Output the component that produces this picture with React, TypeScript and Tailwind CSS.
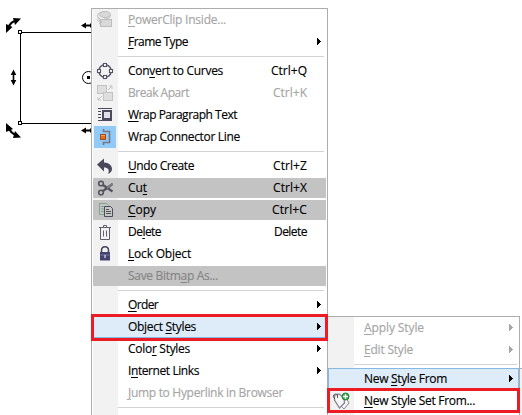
import React from "react";

type IconName = "clip" | "curves" | "break" | "wrap" | "connector" | "undo" | "cut" | "copy" | "delete" | "lock" | "styleSet";

function Icon({ name }: { name: IconName }) {
  const art: Record<IconName, React.ReactNode> = {
    clip: (
      <g fill="#d9d9d9" stroke="#bcbcbc">
        <path d="M6 10C2 8 3 3 9 3" fill="none" />
        <ellipse cx="11" cy="5.500" rx="5.500" ry="3" />
        <path d="M16 6c1 3-2 4-6 4" fill="none" />
        <rect x="6.500" y="10.500" width="11" height="7" />
        <path d="M6 9c-3 0-3 4 0 4M5 11l3 2-3 2" fill="none" />
      </g>
    ),
    curves: (
      <g fill="#fff" stroke="#555266" strokeWidth="1.1">
        <circle cx="11" cy="11" r="6.2" fill="none" strokeWidth="1.4" />
        <rect x="9.5" y="3.5" width="3" height="3" />
        <rect x="9.5" y="15.5" width="3" height="3" />
        <rect x="3.5" y="9.5" width="3" height="3" />
        <rect x="15.5" y="9.5" width="3" height="3" />
      </g>
    ),
    break: (
      <g fill="#dedede" stroke="#c3c3c3">
        <rect x="3.5" y="3.5" width="9" height="8" />
        <rect x="9.500" y="10.500" width="9" height="8" />
        <path d="M14 8l4-4m-3 0h3v3M8 14l-4 4m0-3v3h3" fill="none" />
      </g>
    ),
    wrap: (
      <g stroke="#4c4960" fill="none">
        <path d="M4 4.500h14M4 7.500h3M4 10.500h3M4 13.500h3M4 16.500h14" />
        <rect x="9" y="7" width="8" height="8" strokeWidth="2" fill="#dfe0ea" />
      </g>
    ),
    connector: (
      <g>
        <path d="M9.500 3v2.500h6v11h-6V19" fill="none" stroke="#727789" strokeWidth="1.600" />
        <rect x="6.500" y="8.500" width="5" height="5" fill="#f36b0b" stroke="#91532f" />
        <path d="M7 9.500h4" stroke="#ff9d46" />
      </g>
    ),
    undo: <path d="M3 9.500 10 3.500v4c5 0 8 3 8 6.500 0 2-1.500 4-4 5 2-4 0-6.500-4-6.500v4z" fill="#4b485d" />,
    cut: (
      <g fill="none" stroke="#555261" strokeWidth="1.600">
        <circle cx="6" cy="6.500" r="2.300" />
        <circle cx="6" cy="15.500" r="2.300" />
        <path d="m8 8 9.500 6.500M8 14l9.500-7" strokeWidth="2.200" />
        <path d="m12 11 6-4.500" stroke="#858585" strokeWidth="1.500" />
      </g>
    ),
    copy: (
      <g>
        <path d="M4.500 4.500h7l2 2v9h-9z" fill="#c2c9c4" stroke="#80a18e" />
        <path d="M6 7.500h4M6 10h3M6 12.500h3" stroke="#80a18e" />
        <path d="M9.500 7.500h6l2 2v8h-8z" fill="#c7c7c7" stroke="#4c4b5c" />
        <path d="M11 10.500h3M11 12.500h5M11 14.500h5" stroke="#55525f" />
      </g>
    ),
    delete: (
      <g fill="none" stroke="#62606e">
        <path d="M6.500 7v11.500h9V7M5 6.500h12M9.500 6V4.500h3V6" />
        <path d="M9.500 9.500v6M12.500 9.500v6" />
      </g>
    ),
    lock: (
      <g>
        <path d="M7.500 10V7.500c0-5 7-5 7 0V10" fill="none" stroke="#42405a" strokeWidth="1.500" />
        <rect x="6" y="9" width="10" height="8.500" rx=".5" fill="#44436f" />
        <path d="M6.500 12h9" stroke="#7977a9" />
        <path d="M11 12v3" stroke="#fff" />
      </g>
    ),
    styleSet: (
      <g fill="#f7f7f7" stroke="#878493">
        <path d="m9 7 6-1 4 7-5 6-4-4z" />
        <path d="M4.500 10V5.500L9 4l5 4 .5 5-5 5z" strokeWidth="1.300" />
        <path d="M5 9C1.500 6 4 3 7.500 4.500V8" fill="none" stroke="#55525e" />
        <circle cx="15.500" cy="6.500" r="3.500" fill="#319b42" stroke="#278439" />
        <path d="M13 6.500h5M15.500 4v5" stroke="#fff" strokeWidth="1.400" />
      </g>
    ),
  };
  return <svg width="22" height="22" viewBox="0 0 22 22">{art[name]}</svg>;
}

type Item = {
  label: string;
  mark?: number;
  icon?: IconName;
  shortcut?: string;
  arrow?: boolean;
  disabled?: boolean;
  shaded?: boolean;
  hot?: boolean;
  width: number;
};

function Label({ text, mark, width }: { text: string; mark?: number; width: number }) {
  const ref = React.useRef<HTMLSpanElement>(null);
  React.useLayoutEffect(() => {
    const el = ref.current;
    if (!el) return;
    el.style.letterSpacing = "0px";
    const natural = el.getBoundingClientRect().width;
    el.style.letterSpacing = `${(width - natural) / text.length}px`;
  }, [text, width]);
  return (
    <span ref={ref} className="inline-block whitespace-pre [-webkit-text-stroke:0.15px_currentColor]">
      {mark === undefined ? text : (
        <>{text.slice(0, mark)}<span className="underline decoration-1 underline-offset-2">{text[mark]}</span>{text.slice(mark + 1)}</>
      )}
    </span>
  );
}

function Row({ item, sub = false }: { item: Item; sub?: boolean }) {
  const bg = item.shaded ? "bg-[#c3c3c3]" : item.hot ? "bg-[#deecf9]" : "";
  return (
    <div className={`flex h-[22px] w-full items-center ${item.disabled ? (item.shaded ? "text-[#858585]" : "text-[#a5a5a5]") : "text-black"} ${item.shaded ? "py-px pl-px" : ""}`}>
      <div className={`flex h-full w-full items-center ${bg} ${item.hot ? (sub ? "shadow-[inset_0_0_0_1px_#83b9e5]" : "shadow-[inset_0_-1px_0_#83b9e5]") : ""}`}>
        <div className={`flex shrink-0 items-center justify-center ${item.shaded ? "w-[25px]" : "w-[26px]"}`}>
          {item.icon && <div className={item.icon === "connector" ? "bg-[#91c9f7]" : ""}><Icon name={item.icon} /></div>}
        </div>
        <div className="ml-2.5 flex-1 pb-px"><Label text={item.label} mark={item.mark} width={item.width} /></div>
        {item.shortcut && <div className="mr-[19px] pb-px"><Label text={item.shortcut} width={item.shortcut === "Delete" ? 33 : item.shortcut.endsWith("Q") ? 36 : item.shortcut.endsWith("C") ? 35 : 34} /></div>}
        {item.arrow && <svg className={`mb-px ${sub ? "mr-1.5" : "mr-[5px]"}`} width="4" height="7" viewBox="0 0 4 7" shapeRendering="crispEdges"><path d="M0 0h1v1h1v1h1v1h1v1H3v1H2v1H1v1H0z" fill="currentColor" /></svg>}
      </div>
    </div>
  );
}

function Separator() {
  return <div className="ml-[26px] mr-0.5 h-[7px] pt-[3px]"><div className="h-px bg-[#d2d2d2]" /></div>;
}

const groups: Item[][] = [
  [
    { label: "PowerClip Inside...", mark: 0, icon: "clip", disabled: true, width: 98 },
    { label: "Frame Type", mark: 0, arrow: true, width: 60 },
  ],
  [
    { label: "Convert to Curves", mark: 3, icon: "curves", shortcut: "Ctrl+Q", width: 95 },
    { label: "Break Apart", icon: "break", shortcut: "Ctrl+K", disabled: true, width: 61 },
    { label: "Wrap Paragraph Text", mark: 0, icon: "wrap", width: 109 },
    { label: "Wrap Connector Line", icon: "connector", width: 112 },
  ],
  [
    { label: "Undo Create", mark: 0, icon: "undo", shortcut: "Ctrl+Z", width: 66 },
    { label: "Cut", mark: 2, icon: "cut", shortcut: "Ctrl+X", shaded: true, width: 19 },
    { label: "Copy", mark: 0, icon: "copy", shortcut: "Ctrl+C", shaded: true, width: 28 },
    { label: "Delete", mark: 2, icon: "delete", shortcut: "Delete", width: 33 },
    { label: "Lock Object", mark: 0, icon: "lock", width: 63 },
    { label: "Save Bitmap As...", mark: 9, shaded: true, disabled: true, width: 90 },
  ],
  [
    { label: "Order", mark: 0, arrow: true, width: 30 },
    { label: "Object Styles", mark: 7, arrow: true, hot: true, width: 68 },
    { label: "Color Styles", mark: 4, arrow: true, width: 62 },
    { label: "Internet Links", mark: 1, arrow: true, width: 71 },
    { label: "Jump to Hyperlink in Browser", mark: 0, disabled: true, width: 155 },
  ],
];

function CanvasArt() {
  return (
    <svg className="absolute left-0 top-0" width="92" height="145" viewBox="0 0 92 145">
      <path d="M92 32.500H20.500v91H92" fill="none" stroke="#000" />
      <g fill="#fff" stroke="#000"><rect x="18.500" y="30.500" width="3" height="3" /><rect x="18.500" y="121.500" width="3" height="3" /></g>
      <g>
        <path d="M8.500 28c1-4 4-7 9-8" fill="none" stroke="#000" strokeWidth="2.200" />
        <path d="m13 18 8 .5-6 6.500zM6 24l6.500 3-6.500 6z" />
      </g>
      <g>
        <path d="M8.500 127c1 4 4 7 9 8.500" fill="none" stroke="#000" strokeWidth="2.200" />
        <path d="m6 123 7 6-7 3zM15 131l6 6.500-8 .5z" />
      </g>
      <path d="m13.500 69.500 2.800 5.500h-2v5h2l-2.800 5.500-2.800-5.500h2v-5h-2z" />
      <path d="m81 25.500 5-3v2h4v-1h2v4h-2v-1h-4v2zM81 130.500l5-3v2h4v-1h2v4h-2v-1h-4v2z" />
      <circle cx="88.500" cy="77.500" r="6" fill="none" stroke="#000" />
      <rect x="87" y="76" width="3" height="3" />
    </svg>
  );
}

export default function App() {
  return (
    <main className="relative h-[415px] w-[522px] overflow-hidden bg-white font-['Open_Sans','Noto_Sans',sans-serif] text-[12px] leading-[16px]">
      <CanvasArt />
      <div className="absolute left-[91px] top-2 h-[410px] w-[237px] border border-[#adadad] bg-[linear-gradient(to_right,white_1px,#f2f2f2_1px,#f2f2f2_26px,white_26px)] pr-px">
        {groups.map((group, i) => (
          <React.Fragment key={i}>
            {group.map((item) => <Row key={item.label} item={item} />)}
            <Separator />
          </React.Fragment>
        ))}
      </div>
      <div className="absolute left-[328px] top-[316px] h-[110px] w-[192px] border-r border-t border-[#adadad] bg-[linear-gradient(to_right,#f2f2f2_26px,white_26px)]">
        <Row sub item={{ label: "Apply Style", mark: 0, arrow: true, disabled: true, width: 60 }} />
        <Row sub item={{ label: "Edit Style", mark: 0, arrow: true, disabled: true, width: 49 }} />
        <Separator />
        <Row sub item={{ label: "New Style From", mark: 4, arrow: true, hot: true, width: 83 }} />
        <Row sub item={{ label: "New Style Set From...", mark: 0, icon: "styleSet", width: 111 }} />
      </div>
      <div className="absolute left-[520px] top-[368px] h-[60px] w-1 border-t border-[#adadad] bg-[#f2f2f2]" />
      <div className="absolute left-[91px] top-[314px] h-[27px] w-[237px] border-[3px] border-[#ed1c24]" />
      <div className="absolute left-[327px] top-[388px] h-[25px] w-[193px] border-[3px] border-[#ed1c24]" />
    </main>
  );
}
